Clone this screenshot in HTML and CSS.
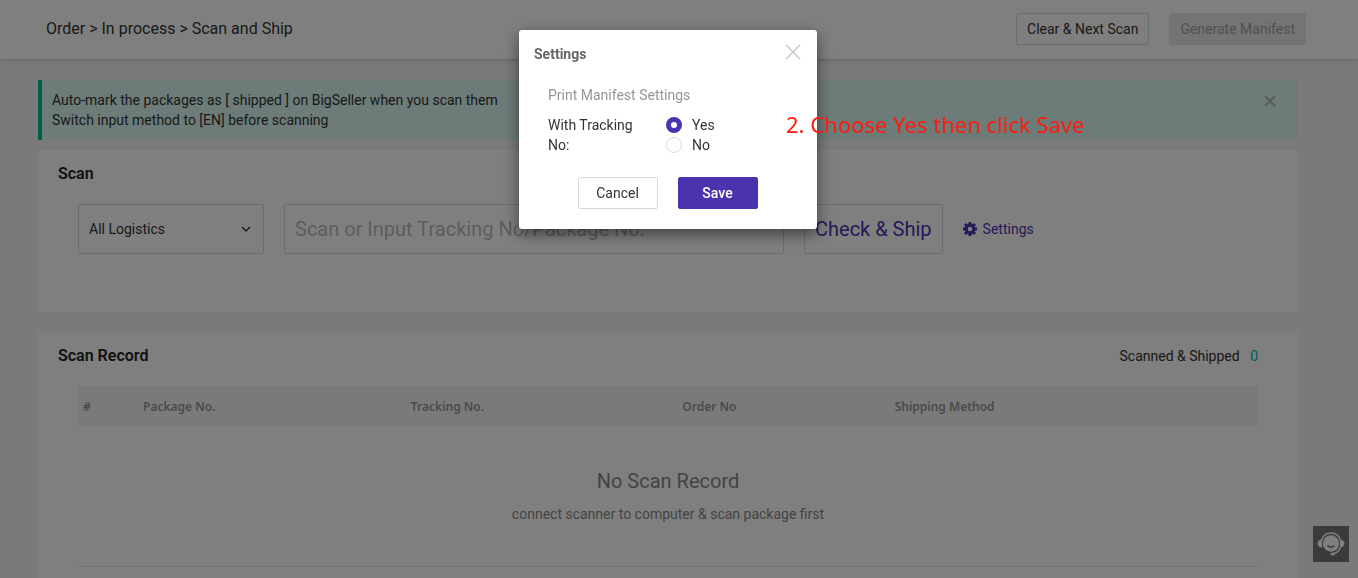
FILE: index.html
```html
<!DOCTYPE html>
<html lang="en">
<head>
  <meta charset="UTF-8">
  <meta name="viewport" content="width=device-width, initial-scale=1.0">
  <title>Scan and Ship</title>
  <link rel="stylesheet" href="styles.css">
</head>
<body>
  <header class="header">
    <div class="breadcrumb">Order &gt; In process &gt; Scan and Ship</div>
    <div class="header-buttons">
      <button class="btn">Clear &amp; Next Scan</button>
      <button class="btn btn-disabled" disabled>Generate Manifest</button>
    </div>
  </header>

  <main class="content">
    <div class="notice">
      <p>Auto-mark the packages as [ shipped ] on BigSeller when you scan them<br>
        Switch input method to [EN] before scanning</p>
      <button class="notice-close" aria-label="Close notice">
        <svg width="14" height="14" viewBox="0 0 14 14"><path d="M2 2l10 10M12 2L2 12" stroke-width="2.4"/></svg>
      </button>
    </div>

    <section class="panel scan">
      <h2>Scan</h2>
      <div class="scan-form">
        <div class="select-wrap">
          <select class="field" aria-label="Logistics">
            <option>All Logistics</option>
          </select>
          <svg class="arrow" width="10" height="6" viewBox="0 0 10 6"><path d="M1 1l4 4 4-4" fill="none" stroke="#333" stroke-width="1.3"/></svg>
        </div>
        <input class="field scan-input" type="text" placeholder="Scan or Input Tracking No/Package No." aria-label="Tracking number">
        <button class="field check-btn">Check &amp; Ship</button>
        <a class="settings-link" href="#">
          <svg width="14" height="14" viewBox="0 0 14 14">
            <g stroke="#4b33b0" stroke-width="3">
              <path d="M7 0v14M0 7h14M2 2l10 10M12 2L2 12"/>
            </g>
            <circle cx="7" cy="7" r="3.8" fill="#fff" stroke="#4b33b0" stroke-width="3"/>
          </svg>
          Settings
        </a>
      </div>
    </section>

    <section class="panel record">
      <div class="record-head">
        <h2>Scan Record</h2>
        <div class="count">Scanned &amp; Shipped <span>0</span></div>
      </div>
      <div class="record-body">
        <table>
          <colgroup>
            <col class="col-num"><col class="col-package"><col class="col-tracking"><col class="col-order"><col>
          </colgroup>
          <thead>
            <tr>
              <th>#</th>
              <th>Package No.</th>
              <th>Tracking No.</th>
              <th>Order No</th>
              <th>Shipping Method</th>
            </tr>
          </thead>
        </table>
        <div class="empty">
          <p class="empty-title">No Scan Record</p>
          <p>connect scanner to computer &amp; scan package first</p>
        </div>
      </div>
    </section>
  </main>

  <button class="support" aria-label="Support">
    <svg width="28" height="24" viewBox="0 0 28 24">
      <circle cx="14" cy="11.5" r="8.2" fill="#fff"/>
      <path d="M4 9.500C5.500 4 9 1 14 1s8.500 3 10 8.500M24 14c-1.200 4.500-4 7-8 7.700" fill="none" stroke="#fff" stroke-width="1.6"/>
      <path d="M5 7.500v8C2.500 15.500.5 13.800.5 11.500S2.500 7.500 5 7.500zM23 7.500v8c2.500 0 4.500-1.700 4.500-4s-2-4-4.500-4z" fill="#fff"/>
      <ellipse cx="15.500" cy="22" rx="2.200" ry="1.600" fill="#fff"/>
      <path d="M10.500 13.500c1.800 2.200 5.200 2.200 7 0" fill="none" stroke="#777" stroke-width="1.500"/>
    </svg>
  </button>

  <div class="overlay">
    <form class="modal" role="dialog" aria-labelledby="modal-title">
      <div class="modal-head">
        <h3 id="modal-title">Settings</h3>
        <button type="button" class="modal-close" aria-label="Close">
          <svg width="16" height="16" viewBox="0 0 16 16"><path d="M1 1l14 14M15 1L1 15" stroke="#ccc" stroke-width="1.6"/></svg>
        </button>
      </div>
      <div class="modal-body">
        <p class="modal-sub">Print Manifest Settings</p>
        <div class="option-row" role="radiogroup" aria-labelledby="tracking-label">
          <div class="option-label" id="tracking-label">With Tracking No:</div>
          <div class="options">
            <label><input type="radio" name="tracking" checked>Yes</label>
            <label><input type="radio" name="tracking">No</label>
          </div>
        </div>
      </div>
      <div class="modal-foot">
        <button type="button" class="btn">Cancel</button>
        <button type="button" class="btn btn-primary">Save</button>
      </div>
    </form>
    <div class="hint">2. Choose Yes then click Save</div>
  </div>
</body>
</html>
```
FILE: styles.css
```css
* {
  box-sizing: border-box;
}
html, body {
  height: 100%;
}
body {
  margin: 0;
  overflow: hidden;
  font-family: Roboto, Arial, sans-serif;
  font-size: 14px;
  line-height: 20px;
  color: #333;
  background: #f5f5f5;
}
h2, h3, p {
  margin: 0;
}
button, input, select {
  font-family: inherit;
  font-size: 14px;
  color: inherit;
}

/* header */
.header {
  display: flex;
  align-items: center;
  justify-content: space-between;
  height: 59px;
  padding: 0 52px 2px 46px;
  background: #fff;
  box-shadow: 0 1px 4px rgba(0, 0, 0, 0.2);
}
.breadcrumb {
  font-size: 16px;
}
.header-buttons {
  display: flex;
  gap: 20px;
}
.btn {
  height: 32px;
  padding: 0 10px;
  border: 1px solid #d5dadd;
  border-radius: 2px;
  background: #fff;
}
.btn-disabled {
  border-color: #e9e9e9;
  background: #e9e9e9;
  color: #a0a0a5;
}
.btn-primary {
  border-color: #4b33b0;
  background: #4b33b0;
  color: #fff;
  font-weight: 500;
}

.content {
  margin: 21px 60px 0 38px;
}
.notice {
  display: flex;
  align-items: flex-start;
  justify-content: space-between;
  padding: 10px 21px 10px 10px;
  border-left: 4px solid #00c08f;
  background: #dbf9f2;
}
.notice-close, .modal-close {
  display: flex;
  padding: 0;
  border: 0;
  background: none;
}
.notice-close {
  margin-top: 4px;
}
.notice-close path {
  stroke: #bbb;
}

/* panels */
.panel {
  padding: 14px 40px 20px 20px;
  background: #fff;
}
.panel h2 {
  font-size: 16px;
  font-weight: 600;
  line-height: 20px;
  color: #222;
}
.scan {
  margin-top: 10px;
  padding-bottom: 58px;
}
.scan-form {
  display: flex;
  align-items: center;
  gap: 20px;
  padding: 20px 0 0 20px;
}
.field {
  height: 50px;
  padding: 0 10px;
  border: 1px solid #d5dadd;
  border-radius: 2px;
  background: #fff;
}
.select-wrap {
  position: relative;
  width: 186px;
}
.select-wrap .field {
  width: 100%;
  appearance: none;
}
.arrow {
  position: absolute;
  right: 13px;
  top: 22px;
}
.scan-input {
  width: 500px;
  font-size: 20px;
}
.scan-input::placeholder {
  color: #bbb;
}
.check-btn {
  font-size: 20px;
  color: #4b33b0;
}
.settings-link {
  display: flex;
  align-items: center;
  gap: 6px;
  color: #4b33b0;
  text-decoration: none;
}

.record {
  margin-top: 20px;
}
.record-head {
  display: flex;
  justify-content: space-between;
}
.count span {
  margin-left: 7px;
  color: #00c08f;
}
.record-body {
  padding: 20px 0 0 20px;
}
table {
  width: 100%;
  border-collapse: collapse;
  table-layout: fixed;
}
th {
  height: 40px;
  padding: 2px 5px 0;
  background: #f5f5f5;
  font-family: "Noto Sans", sans-serif;
  font-size: 12px;
  font-weight: 600;
  text-align: left;
  color: #95959b;
}
.col-num {
  width: 60px;
}
.col-package {
  width: 22.7%;
}
.col-tracking {
  width: 23%;
}
.col-order {
  width: 18%;
}
.empty {
  padding: 42px 0;
  border-bottom: 1px solid #e8e8e8;
  text-align: center;
  color: #888;
}
.empty-title {
  margin-bottom: 10px;
  font-size: 20px;
  line-height: 26px;
}

.support {
  position: fixed;
  right: 9px;
  bottom: 16px;
  display: flex;
  align-items: center;
  justify-content: center;
  width: 36px;
  height: 36px;
  padding: 0;
  border: 0;
  background: #777;
}

/* settings dialog */
.overlay {
  position: fixed;
  inset: 0;
  padding: 30px 60px 0 38px;
  background: rgba(0, 0, 0, 0.5);
}
.modal {
  width: 298px;
  margin: 0 auto;
  padding: 14px 16px 15px 15px;
  border-radius: 3px;
  background: #fff;
  box-shadow: 0 5px 15px rgba(0, 0, 0, 0.5);
}
.modal-head {
  display: flex;
  justify-content: space-between;
}
.modal-head h3 {
  font-size: 14px;
  font-weight: 700;
  line-height: 20px;
  color: #666;
}
.modal-body {
  padding: 21px 14px 0;
}
.modal-sub {
  margin-bottom: 10px;
  color: #95959b;
}
.option-row {
  display: flex;
}
.option-label {
  width: 118px;
  padding-right: 20px;
}
.options label {
  display: flex;
  align-items: center;
  gap: 10px;
}
.options input {
  appearance: none;
  width: 16px;
  height: 16px;
  margin: 0;
  border: 1px solid #d5dadd;
  border-radius: 50%;
  background: #fff;
}
.options input:checked {
  border: 5px solid #4b33b0;
}
.modal-foot {
  display: flex;
  justify-content: center;
  gap: 20px;
  padding: 22px 0 5px;
}
.modal-foot .btn {
  width: 80px;
}
.hint {
  position: absolute;
  left: 786px;
  top: 109px;
  font-family: "Noto Sans", sans-serif;
  font-size: 22px;
  line-height: 30px;
  color: #ff1a0d;
}
```
